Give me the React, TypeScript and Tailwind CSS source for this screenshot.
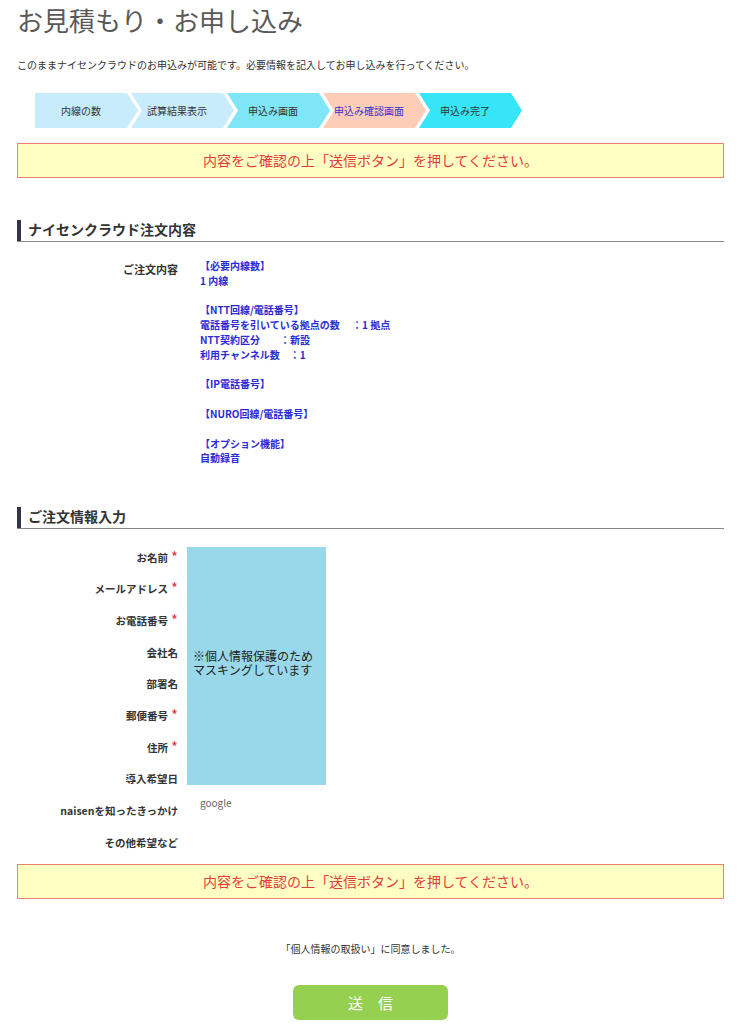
import React from "react";

const font = { fontFamily: '"Noto Sans CJK JP", "Noto Sans", sans-serif' };

const steps = [
  { label: "内線の数", bg: "bg-[#c8ecfc]", text: "text-[#333]", first: true },
  { label: "試算結果表示", bg: "bg-[#c8ecfc]", text: "text-[#333]", first: false },
  { label: "申込み画面", bg: "bg-[#7fe6f8]", text: "text-[#333]", first: false },
  { label: "申込み確認画面", bg: "bg-[#fecdb8]", text: "text-[#3333cc]", first: false },
  { label: "申込み完了", bg: "bg-[#36e6f8]", text: "text-[#333]", first: false },
];

function Notice() {
  return (
    <div className="h-[35px] border border-[#e8836f] bg-[#ffffc4] flex items-center justify-center text-[14px] text-[#e23c3c]">
      内容をご確認の上「送信ボタン」を押してください。
    </div>
  );
}

function SectionHeader({ title }: { title: string }) {
  return (
    <div className="border-b border-[#888]">
      <div className="border-l-4 border-[#33334f] pl-[7px] pt-[1px] pb-[3px] leading-[17px] text-[14px] font-bold text-[#333]">
        {title}
      </div>
    </div>
  );
}

const orderLines = [
  "【必要内線数】",
  "1 内線",
  "",
  "【NTT回線/電話番号】",
  "電話番号を引いている拠点の数\u3000 ：1 拠点",
  "NTT契約区分\u3000\u3000：新設",
  "利用チャンネル数\u3000：1",
  "",
  "【IP電話番号】",
  "",
  "【NURO回線/電話番号】",
  "",
  "【オプション機能】",
  "自動録音",
];

const formRows = [
  { label: "お名前", req: true },
  { label: "メールアドレス", req: true },
  { label: "お電話番号", req: true },
  { label: "会社名", req: false },
  { label: "部署名", req: false },
  { label: "郵便番号", req: true },
  { label: "住所", req: true },
  { label: "導入希望日", req: false },
  { label: "naisenを知ったきっかけ", req: false, value: "google" },
  { label: "その他希望など", req: false },
];

export default function App() {
  return (
    <div className="w-[741px] bg-white px-[17px] pb-[6px]" style={font}>
      <h1 className="text-[26px] leading-[40px] font-normal text-[#595959]">お見積もり・お申し込み</h1>
      <p className="mt-[17px] text-[10px] leading-[15px] text-[#333]">
        このままナイセンクラウドのお申込みが可能です。必要情報を記入してお申し込みを行ってください。
      </p>

      <div className="mt-[21px] ml-[18px] flex">
        {steps.map((s) => (
          <div
            key={s.label}
            className={
              (s.first
                ? "[clip-path:polygon(0_0,92px_0,103px_50%,92px_100%,0_100%)] "
                : "-ml-[7px] [clip-path:polygon(0_0,92px_0,103px_50%,92px_100%,0_100%,11px_50%)] ") +
              "w-[103px] h-[35px] pr-[11px] flex items-center justify-center text-[10px] " +
              s.bg +
              " " +
              s.text
            }
          >
            {s.label}
          </div>
        ))}
      </div>

      <div className="mt-[15px]">
        <Notice />
      </div>

      <div className="mt-[42px]">
        <SectionHeader title="ナイセンクラウド注文内容" />
      </div>

      <div className="mt-[17px] flex">
        <div className="w-[161px] shrink-0 text-right text-[11px] font-bold text-[#333] leading-[15px] pt-[3px]">ご注文内容</div>
        <div className="ml-[22px] text-[10px] leading-[14.8px] font-bold text-[#2b2bd6] whitespace-pre">
          {orderLines.map((l, i) => (
            <div key={i} className="h-[14.8px]">{l}</div>
          ))}
        </div>
      </div>

      <div className="mt-[41px]">
        <SectionHeader title="ご注文情報入力" />
      </div>

      <div className="relative mt-[12px]">
        {formRows.map((r) => (
          <div key={r.label} className="flex h-[31.7px] items-center">
            <div className="w-[161px] shrink-0 text-right text-[10.5px] font-bold text-[#333] leading-[15px]">
              {r.label}
              {r.req && <span className="relative top-[1px] ml-[3px] text-[15px] leading-[10px] font-normal text-[#e4334f]">*</span>}
            </div>
            {r.value && (
              <div className="ml-[22px] self-start pt-0 text-[10px] leading-[15px] text-[#666]">{r.value}</div>
            )}
          </div>
        ))}
        <div className="absolute left-[170px] top-[6px] w-[139px] h-[238px] bg-[#99d8ea] flex flex-col justify-center pl-[6px] pb-[6px] text-[12px] leading-[14px] text-[#222]">
          <div>※個人情報保護のため</div>
          <div>マスキングしています</div>
        </div>
      </div>

      <div className="mt-[6px]">
        <Notice />
      </div>

      <p className="mt-[42px] text-center text-[10px] leading-[15px] text-[#333]">「個人情報の取扱い」に同意しました。</p>

      <div className="mt-[29px] flex justify-center">
        <button className="w-[155px] h-[35px] rounded-[6px] bg-[#96d050] text-white text-[15px] leading-none">
          送　信
        </button>
      </div>
    </div>
  );
}
